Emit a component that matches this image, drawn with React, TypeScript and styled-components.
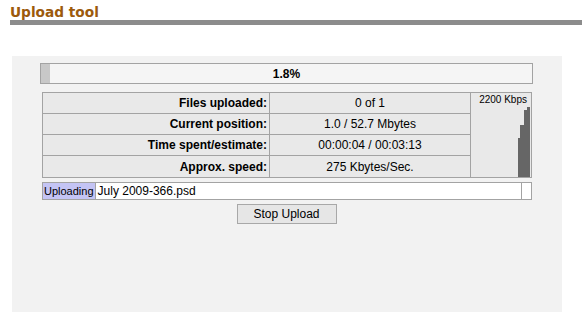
import styled, { createGlobalStyle } from 'styled-components'

const GlobalStyle = createGlobalStyle`
    body {
        margin: 0;
        background: #ffffff;
        font-family: "Liberation Sans", Arial, sans-serif;
        font-size: 12px;
        color: #000000;
    }
`

const stats = [
    { label: 'Files uploaded:', value: '0 of 1' },
    { label: 'Current position:', value: '1.0 / 52.7 Mbytes' },
    { label: 'Time spent/estimate:', value: '00:00:04 / 00:03:13' },
    { label: 'Approx. speed:', value: '275 Kbytes/Sec.' }
]

// bar heights of the speed graph, oldest first
const speedBars = [
    { width: 2, height: 39 },
    { width: 4, height: 52 },
    { width: 3, height: 67 },
    { width: 3, height: 70 }
]

const percent = 1.8

export default function App() {
    return (
        <Page>
            <GlobalStyle />
            <Header>
                <Title>Upload tool</Title>
                <Rule />
            </Header>
            <Panel>
                <ProgressBar>
                    <ProgressFill style={{ width: `${percent}%` }} />
                    <ProgressText>{percent}%</ProgressText>
                </ProgressBar>
                <StatsGrid>
                    {stats.map((s, i) => (
                        <StatRow key={s.label} $last={i === stats.length - 1}>
                            <Label>{s.label}</Label>
                            <Value>{s.value}</Value>
                        </StatRow>
                    ))}
                    <Graph>
                        <GraphCaption>2200 Kbps</GraphCaption>
                        <Bars>
                            {speedBars.map((b, i) => (
                                <Bar key={i} style={{ width: b.width, height: b.height }} />
                            ))}
                        </Bars>
                    </Graph>
                </StatsGrid>
                <FileBar>
                    <FileTag>Uploading</FileTag>
                    <FileName>July 2009-366.psd</FileName>
                    <FileEnd />
                </FileBar>
                <ButtonRow>
                    <StopButton>Stop Upload</StopButton>
                </ButtonRow>
            </Panel>
        </Page>
    )
}

const Page = styled.div`
    width: 582px;
    height: 330px;
    overflow: hidden;
`

const Header = styled.div`
    padding: 5px 0 0 10px;
`

const Title = styled.h1`
    margin: 0;
    font-family: "DejaVu Sans", Verdana, sans-serif;
    font-size: 13.7px;
    font-weight: bold;
    line-height: 15px;
    color: #9c5a0c;
`

const Rule = styled.div`
    height: 5px;
    background: #8c8c8c;
`

const Panel = styled.div`
    margin: 31px 0 0 12px;
    width: 550px;
    height: 256px;
    box-sizing: border-box;
    padding: 7px 29px 0 28px;
    background: #f2f2f2;
    display: flex;
    flex-direction: column;
`

const ProgressBar = styled.div`
    position: relative;
    height: 21px;
    box-sizing: border-box;
    border: 1px solid #a3a3a3;
    background: #f5f5f5;
    display: flex;
    align-items: center;
    justify-content: center;
`

const ProgressFill = styled.div`
    position: absolute;
    left: 0;
    top: 0;
    bottom: 0;
    background: #c8c8c8;
`

const ProgressText = styled.span`
    position: relative;
    font-weight: bold;
    font-size: 12px;
`

const StatsGrid = styled.div`
    margin: 8px 1px 0 2px;
    display: grid;
    grid-template-columns: 227px 201px 1fr;
    border: 1px solid #a3a3a3;
    background: #e9e9e9;
`

const StatRow = styled.div<{ $last?: boolean }>`
    grid-column: 1 / 3;
    display: grid;
    grid-template-columns: 227px 201px;
    height: 21px;
    box-sizing: border-box;
    border-bottom: ${({ $last }) => ($last ? 'none' : '1px solid #a3a3a3')};
`

const Label = styled.div`
    display: flex;
    align-items: center;
    justify-content: flex-end;
    padding-right: 2px;
    font-weight: bold;
    border-right: 1px solid #a3a3a3;
`

const Value = styled.div`
    display: flex;
    align-items: center;
    justify-content: center;
    border-right: 1px solid #a3a3a3;
`

const Graph = styled.div`
    grid-column: 3;
    grid-row: 1 / 5;
    display: flex;
    flex-direction: column;
    justify-content: space-between;
    align-items: flex-end;
`

const GraphCaption = styled.div`
    font-size: 10px;
    line-height: 12px;
    padding: 1px 4px 0 0;
`

const Bars = styled.div`
    display: flex;
    align-items: flex-end;
    padding-right: 1px;
`

const Bar = styled.div`
    background: #666666;
`

const FileBar = styled.div`
    margin: 4px 1px 0 2px;
    height: 18px;
    box-sizing: border-box;
    border: 1px solid #a3a3a3;
    background: #ffffff;
    display: flex;
`

const FileTag = styled.div`
    background: #c4c4f4;
    border-right: 1px solid #a3a3a3;
    display: flex;
    align-items: center;
    padding: 0 1px;
    font-size: 11px;
`

const FileName = styled.div`
    flex: 1;
    display: flex;
    align-items: center;
    padding-left: 2px;
`

const FileEnd = styled.div`
    width: 9px;
    border-left: 1px solid #a3a3a3;
`

const ButtonRow = styled.div`
    margin-top: 4px;
    display: flex;
    justify-content: center;
`

const StopButton = styled.button`
    width: 100px;
    height: 20px;
    padding: 0;
    font-family: "Liberation Sans", Arial, sans-serif;
    font-size: 12px;
    color: #000000;
    background: #e6e6e6;
    border: 1px solid #a8a8a8;
    border-radius: 0;
`
